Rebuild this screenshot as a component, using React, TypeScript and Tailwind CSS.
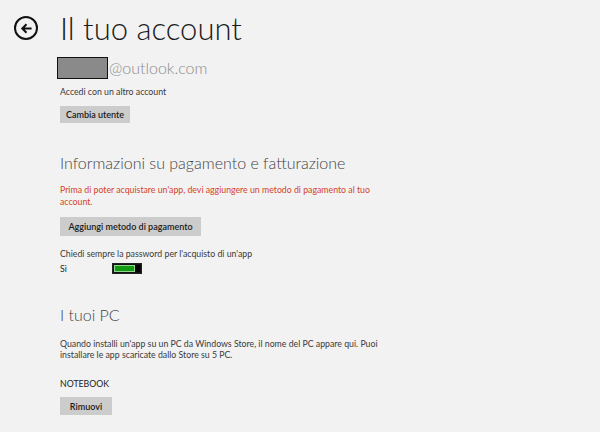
import React from 'react';

// ============================================
// Account settings page (Windows Store style)
// ============================================

const BackButton = () => (
  <button className="flex h-[24px] w-[24px] items-center justify-center rounded-full border-2 border-[#111]">
    <svg width="13" height="13" viewBox="0 0 14 14" fill="none">
      <path d="M12.5 7H2.5M7 2.5L2.5 7L7 11.5" stroke="#111" strokeWidth="2.2" />
    </svg>
  </button>
);

const GrayButton = ({ children, className = '' }: { children: React.ReactNode; className?: string }) => (
  <button
    className={`block bg-[#cccccc] text-[9px] font-semibold leading-none text-[#1a1a1a] ${className}`}
  >
    {children}
  </button>
);

const Toggle = () => (
  <div className="flex h-[11px] w-[30px] items-stretch border border-[#222] bg-[#111] p-[1px]">
    <div className="flex-1 border border-[#8fd88f] bg-[#139a13]" />
    <div className="w-[5px] bg-[#000]" />
  </div>
);

export default function App() {
  return (
    <div
      className="h-[432px] w-[600px] overflow-hidden bg-[#f2f2f2] text-[#333]"
      style={{ fontFamily: 'Lato, "Open Sans", sans-serif' }}
    >
      {/* Header */}
      <div className="flex items-center pt-[13px]">
        <div className="ml-[14px]">
          <BackButton />
        </div>
        <h1 className="ml-[22px] text-[31px] font-light leading-[30px] text-[#1a1a1a]">Il tuo account</h1>
      </div>

      <div className="pl-[60px]">
        {/* Account */}
        <div className="mt-[14px] flex h-[22px] items-center">
          <div className="ml-[-3px] h-[22px] w-[51px] border border-[#111] bg-[#8a8a8a]" />
          <span className="ml-[1px] text-[16px] font-light leading-none text-[#8c8c8c]">@outlook.com</span>
        </div>
        <p className="mt-[8px] text-[8.75px] leading-[10px] text-[#3a3a3a]">Accedi con un altro account</p>
        <GrayButton className="mt-[9px] h-[17px] w-[70px]">Cambia utente</GrayButton>

        {/* Payment */}
        <h2 className="mt-[30px] text-[16px] font-light leading-[20px] text-[#444]">
          Informazioni su pagamento e fatturazione
        </h2>
        <p className="mt-[11px] w-[325px] text-[8.75px] leading-[12px] text-[#d5432a]">
          Prima di poter acquistare un'app, devi aggiungere un metodo di pagamento al tuo account.
        </p>
        <GrayButton className="mt-[9px] h-[19px] w-[141px]">Aggiungi metodo di pagamento</GrayButton>
        <p className="mt-[13px] text-[8.75px] leading-[10px] text-[#3a3a3a]">
          Chiedi sempre la password per l'acquisto di un'app
        </p>
        <div className="mt-[4px] flex items-center">
          <span className="w-[52px] text-[8.75px] leading-[10px] text-[#222]">Sì</span>
          <Toggle />
        </div>

        {/* PCs */}
        <h2 className="mt-[31px] text-[16px] font-light leading-[20px] text-[#444]">I tuoi PC</h2>
        <p className="mt-[13px] w-[325px] text-[8.75px] leading-[11px] text-[#3a3a3a]">
          Quando installi un'app su un PC da Windows Store, il nome del PC appare qui. Puoi installare le app scaricate
          dallo Store su 5 PC.
        </p>
        <p className="mt-[19px] text-[8.75px] leading-[10px] text-[#222]">NOTEBOOK</p>
        <GrayButton className="mt-[8px] h-[18px] w-[52px]">Rimuovi</GrayButton>
      </div>
    </div>
  );
}
